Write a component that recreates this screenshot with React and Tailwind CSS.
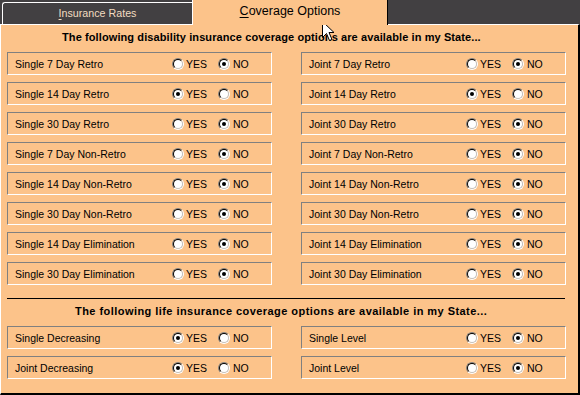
import React from 'react';

const disabilityRows = [
    [{ label: 'Single 7 Day Retro', yes: false }, { label: 'Joint 7 Day Retro', yes: false }],
    [{ label: 'Single 14 Day Retro', yes: true }, { label: 'Joint 14 Day Retro', yes: true }],
    [{ label: 'Single 30 Day Retro', yes: false }, { label: 'Joint 30 Day Retro', yes: false }],
    [{ label: 'Single 7 Day Non-Retro', yes: false }, { label: 'Joint 7 Day Non-Retro', yes: false }],
    [{ label: 'Single 14 Day Non-Retro', yes: false }, { label: 'Joint 14 Day Non-Retro', yes: false }],
    [{ label: 'Single 30 Day Non-Retro', yes: false }, { label: 'Joint 30 Day Non-Retro', yes: false }],
    [{ label: 'Single 14 Day Elimination', yes: false }, { label: 'Joint 14 Day Elimination', yes: false }],
    [{ label: 'Single 30 Day Elimination', yes: false }, { label: 'Joint 30 Day Elimination', yes: false }],
];

const lifeRows = [
    [{ label: 'Single Decreasing', yes: true }, { label: 'Single Level', yes: false }],
    [{ label: 'Joint Decreasing', yes: true }, { label: 'Joint Level', yes: false }],
];

// win95 style radio circle
const Radio = ({ checked }) => (
    <span className="w-[12px] h-[12px] rounded-full border border-t-[#808080] border-l-[#808080] border-b-white border-r-white flex">
        <span className="flex-1 rounded-full border border-t-black border-l-black border-b-[#c0c0c0] border-r-[#c0c0c0] bg-white flex items-center justify-center">
            {checked && <span className="w-[4px] h-[4px] rounded-full bg-black" />}
        </span>
    </span>
);

const OptionRow = ({ label, yes }) => (
    <div className="w-[265px] h-[23px] flex items-center pl-[7px] border border-t-[#808080] border-l-[#808080] border-b-white border-r-white">
        <span className="w-[157px] text-[10.5px] leading-[12px] pt-[1px] whitespace-nowrap">{label}</span>
        <span className="w-[46px] flex items-center gap-[2px]">
            <Radio checked={yes} />
            <span className="text-[10.5px] leading-[12px]">YES</span>
        </span>
        <span className="flex items-center gap-[3px]">
            <Radio checked={!yes} />
            <span className="text-[10.5px] leading-[12px]">NO</span>
        </span>
    </div>
);

const RowGrid = ({ rows }) => (
    <div className="flex flex-col gap-[7px] pl-[6px]">
        {rows.map((pair, i) => (
            <div key={i} className="flex gap-[29px]">
                <OptionRow {...pair[0]} />
                <OptionRow {...pair[1]} />
            </div>
        ))}
    </div>
);

const App = () => {
    return (
        <div className="w-[580px] h-[395px] bg-[#424042] relative overflow-hidden font-['Liberation_Sans',Arial,sans-serif] text-black">
            {/* Tabs */}
            <div className="flex h-[24px] items-end">
                <div className="ml-[2px] w-[190px] h-[22px] border-t border-l border-white rounded-tl-[3px] flex justify-center pt-[4px] text-[10.7px] leading-[12px] text-[#f2dcc0]">
                    <span><u className="underline-offset-[2px]">I</u>nsurance Rates</span>
                </div>
                <div className="relative z-10 -mb-px w-[196px] h-[25px] bg-[#fcc38a] border-l border-white border-r border-r-black flex justify-center pt-[4px] text-[12.5px] leading-[14px]">
                    <span><u className="underline-offset-[2px]">C</u>overage Options</span>
                </div>
            </div>

            {/* Panel */}
            <div className="h-[371px] bg-[#fcc38a] border-t border-l border-white border-r-2 border-r-black border-b-2 border-b-black">
                <div className="h-[27px] pl-[61px] pt-[5px] text-[11px] leading-[14px] font-bold tracking-[0.1px] whitespace-nowrap">
                    The following disability insurance coverage options are available in my State...
                </div>
                <RowGrid rows={disabilityRows} />

                <div className="mt-[13px] ml-[6px] w-[558px] h-px bg-black" />

                <div className="h-[27px] pl-[74px] pt-[5px] text-[11px] leading-[14px] font-bold tracking-[0.45px] whitespace-nowrap">
                    The following life insurance coverage options are available in my State...
                </div>
                <RowGrid rows={lifeRows} />
            </div>

            {/* mouse cursor */}
            <svg className="absolute left-[322px] top-[21px]" width="13" height="21" viewBox="0 0 13 21">
                <path d="M0.5 0.5 L0.5 16.5 L4.5 12.5 L7.5 19.5 L10 18.5 L7 11.5 L12 11.5 Z" fill="white" stroke="black" strokeWidth="1" />
            </svg>
        </div>
    );
};

export default App;
